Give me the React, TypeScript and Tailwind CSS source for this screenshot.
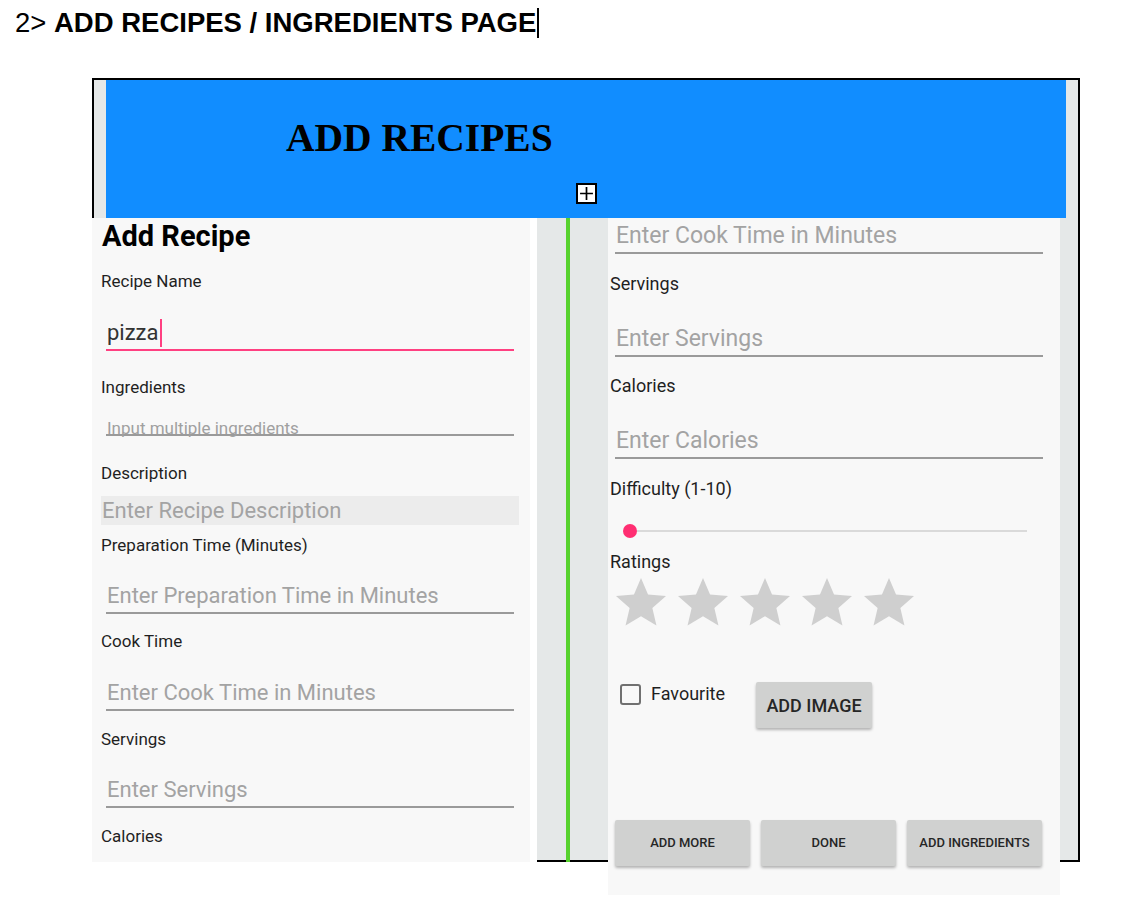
import React from "react"

function Label({ children, className = "" }: { children: React.ReactNode; className?: string }) {
  return <div className={`leading-[22px] text-[#1f1f1f] ${className}`}>{children}</div>
}

function Field({ text, className = "" }: { text: string; className?: string }) {
  return (
    <div className={`border-b-2 border-[#9a9a9a] pb-[2px] pl-[1px] leading-[28px] text-[#a3a3a3] ${className}`}>
      {text}
    </div>
  )
}

function Star() {
  return (
    <svg viewBox="0 0 24 24" className="w-[60px] h-[60px] shrink-0">
      <path
        d="M12 17.27L18.18 21l-1.64-7.03L22 9.24l-7.19-.61L12 2 9.19 8.63 2 9.24l5.46 4.73L5.82 21z"
        fill="#cfcfcf"
      />
    </svg>
  )
}

function GrayButton({ children, className = "" }: { children: React.ReactNode; className?: string }) {
  return (
    <div
      className={`flex items-center justify-center rounded-[2px] bg-[#d0d1d0] font-medium text-[#262626] shadow-[0_2px_3px_rgba(0,0,0,0.28)] ${className}`}
    >
      {children}
    </div>
  )
}

export default function App() {
  return (
    <div className="min-h-[900px] bg-white font-['Roboto',sans-serif]">
      {/* page heading */}
      <div className="flex items-center h-[45px] pl-[15px] font-['Liberation_Sans',Arial,sans-serif] text-[27.5px] text-black">
        <span>2&gt;&nbsp;</span>
        <span className="font-bold">ADD RECIPES / INGREDIENTS PAGE</span>
        <span className="ml-[1px] w-[2px] h-[30px] bg-black" />
      </div>

      <div className="mt-[33px] ml-[92px] w-[988px]">
        {/* banner row */}
        <div className="flex h-[140px] border-t-2 border-l-2 border-r-2 border-black">
          <div className="w-[12px] bg-[#e5e8e8]" />
          <div className="flex flex-1 flex-col bg-[#118dff]">
            <div className="mt-[34px] pl-[180px] font-['Liberation_Serif','Times_New_Roman',serif] text-[39.5px] leading-[48px] font-bold text-black">
              ADD RECIPES
            </div>
            <div className="mt-[21px] self-center flex items-center justify-center w-[21px] h-[21px] border-2 border-black bg-white">
              <svg viewBox="0 0 14 14" className="w-[15px] h-[15px]">
                <path d="M7 1v12M1 7h12" stroke="black" strokeWidth="1.6" />
              </svg>
            </div>
          </div>
          <div className="w-[12px] bg-[#e5e8e8]" />
        </div>

        {/* screenshots row */}
        <div className="flex items-start">
          {/* left phone screen */}
          <div className="w-[438px] h-[644px] shrink-0 bg-[#f8f8f8] pl-[9px] text-[17px]">
            <div className="pl-[1px] text-[29px] leading-[36px] font-bold text-black">Add Recipe</div>
            <Label className="mt-[16px]">Recipe Name</Label>
            <div className="ml-[5px] mt-[27px] w-[408px] flex items-center border-b-2 border-[#ff4081] pb-[2px] pl-[1px] text-[22px] leading-[28px] text-[#333]">
              pizza
              <span className="ml-[1px] w-[2px] h-[28px] bg-[#ff4081]" />
            </div>
            <Label className="mt-[25px]">Ingredients</Label>
            <div className="ml-[5px] mt-[20px] w-[408px] h-[18px] border-b-2 border-[#9a9a9a] pl-[1px] text-[17px] leading-[20px] text-[#a0a0a0]">
              Input multiple ingredients
            </div>
            <Label className="mt-[26px]">Description</Label>
            <div className="mt-[12px] w-[418px] h-[29px] bg-[#ececec] pl-[1px] text-[22px] leading-[29px] text-[#a3a3a3]">
              Enter Recipe Description
            </div>
            <Label className="mt-[9px]">Preparation Time (Minutes)</Label>
            <Field className="ml-[5px] mt-[26px] w-[408px] text-[22px]" text="Enter Preparation Time in Minutes" />
            <Label className="mt-[16px]">Cook Time</Label>
            <Field className="ml-[5px] mt-[27px] w-[408px] text-[22px]" text="Enter Cook Time in Minutes" />
            <Label className="mt-[17px]">Servings</Label>
            <Field className="ml-[5px] mt-[26px] w-[408px] text-[22px]" text="Enter Servings" />
            <Label className="mt-[17px]">Calories</Label>
          </div>

          <div className="w-[7px] h-[644px] shrink-0 bg-white" />

          {/* remainder of frame with second screen */}
          <div className="flex items-start w-[543px] h-[644px] shrink-0 bg-[#e5e8e8] border-r-2 border-b-2 border-black">
            <div className="ml-[29px] w-[4px] h-[644px] bg-[#57d22e]" />
            <div className="ml-[38px] w-[452px] h-[677px] shrink-0 bg-[#f8f8f8] pl-[2px] text-[18px]">
              <Field className="ml-[5px] mt-[4px] w-[428px] text-[23px]" text="Enter Cook Time in Minutes" />
              <Label className="mt-[19px]">Servings</Label>
              <Field className="ml-[5px] mt-[30px] w-[428px] text-[23px]" text="Enter Servings" />
              <Label className="mt-[18px]">Calories</Label>
              <Field className="ml-[5px] mt-[30px] w-[428px] text-[23px]" text="Enter Calories" />
              <Label className="mt-[19px]">Difficulty (1-10)</Label>

              <div className="ml-[13px] mt-[24px] flex items-center h-[14px]">
                <div className="w-[14px] h-[14px] rounded-full bg-[#ff2e72] shrink-0" />
                <div className="w-[390px] h-[2px] bg-[#dadada]" />
              </div>

              <Label className="mt-[13px]">Ratings</Label>
              <div className="ml-[1px] flex gap-[2px]">
                <Star />
                <Star />
                <Star />
                <Star />
                <Star />
              </div>

              <div className="mt-[49px] flex items-start pl-[10px]">
                <div className="mt-[2px] w-[21px] h-[21px] rounded-[3px] border-2 border-[#707070] shrink-0" />
                <div className="ml-[10px] w-[105px] leading-[22px] text-[#1f1f1f] mt-[1px]">Favourite</div>
                <GrayButton className="w-[116px] h-[46px] text-[18px]">ADD IMAGE</GrayButton>
              </div>

              <div className="ml-[5px] mt-[92px] flex gap-[11px]">
                <GrayButton className="w-[135px] h-[46px] text-[13px]">ADD MORE</GrayButton>
                <GrayButton className="w-[135px] h-[46px] text-[13px]">DONE</GrayButton>
                <GrayButton className="w-[135px] h-[46px] text-[13px]">ADD INGREDIENTS</GrayButton>
              </div>
            </div>
          </div>
        </div>
      </div>
    </div>
  )
}
